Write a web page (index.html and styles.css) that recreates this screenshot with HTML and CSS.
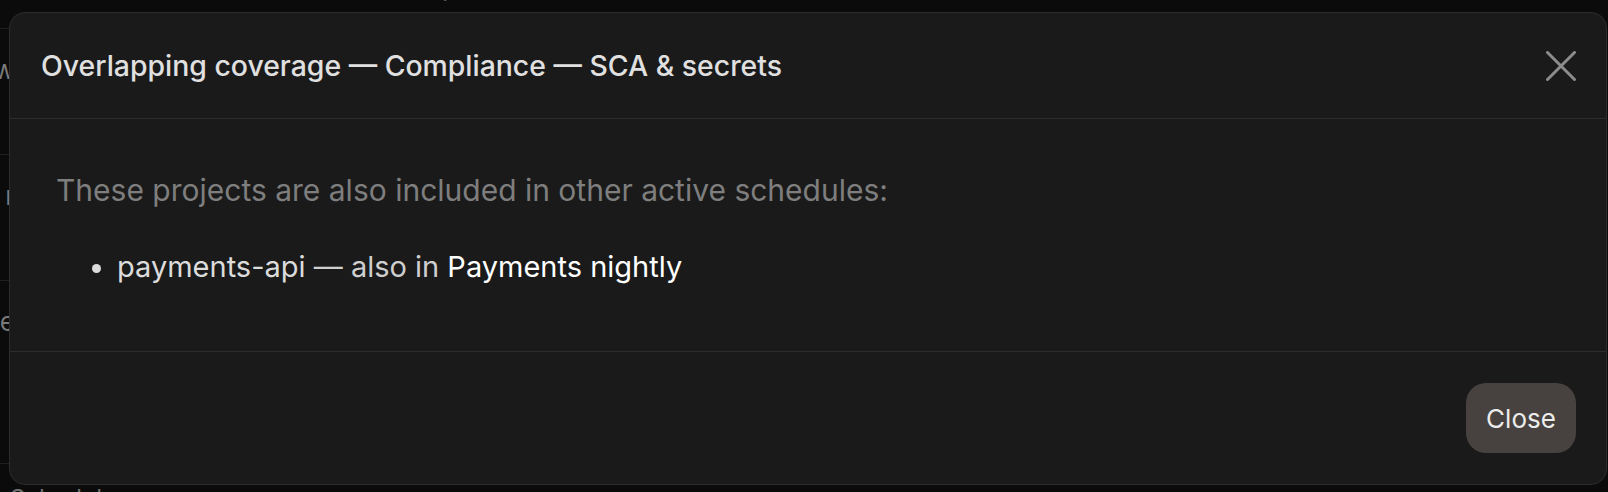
FILE: index.html
```html
<!DOCTYPE html>
<html lang="en">
<head>
<meta charset="utf-8">
<title>Overlapping coverage</title>
<link rel="stylesheet" href="styles.css">
</head>
<body>
<div class="page">
  <div class="top-text">Last run · passed</div>
  <div class="rows">
    <div class="row"><span class="cell">w</span></div>
    <div class="row"><span class="cell">r</span></div>
    <div class="row"><span class="cell">e</span></div>
  </div>
  <div class="bottom-text">Schedules</div>
</div>

<div class="overlay">
  <div class="modal" role="dialog" aria-labelledby="modal-title">
    <div class="modal-header">
      <h2 class="modal-title" id="modal-title">Overlapping coverage — Compliance — SCA &amp; secrets</h2>
      <button class="icon-btn" aria-label="Close">
        <svg width="30" height="30" viewBox="0 0 30 30" fill="none" stroke="currentColor" stroke-width="3" stroke-linecap="round">
          <path d="M1.5 1.5 L28.5 28.5 M28.5 1.5 L1.5 28.5"/>
        </svg>
      </button>
    </div>
    <div class="modal-body">
      <p class="lead">These projects are also included in other active schedules:</p>
      <ul class="overlap-list">
        <li><span class="proj">payments-api</span> <span class="also">— also in</span> <span class="sched">Payments nightly</span></li>
      </ul>
    </div>
    <div class="modal-footer">
      <button class="btn">Close</button>
    </div>
  </div>
</div>
</body>
</html>
```

FILE: styles.css
```css
* { box-sizing: border-box; }
html, body { margin: 0; padding: 0; }
body {
  background: #0b0b0b;
  font-family: Inter, "Noto Sans", sans-serif;
  width: 1608px;
  height: 492px;
  overflow: hidden;
  position: relative;
  color: #ddd;
}

.page {
  height: 492px;
  overflow: hidden;
  display: flex;
  flex-direction: column;
}
.top-text {
  font-size: 24px;
  line-height: 30px;
  color: #6f6f6f;
  margin: -27px 0 0 330px;
  height: 55px;
  flex: none;
}
.rows {
  display: flex;
  flex-direction: column;
  border-top: 1px solid #1f1f1f;
  width: 9px;
  overflow: hidden;
  flex: none;
}
.row {
  height: 126px;
  border-bottom: 1px solid #1f1f1f;
  display: flex;
  align-items: flex-start;
  justify-content: flex-end;
  padding-top: 26px;
}
.row:last-child { height: 183px; }
.cell { font-size: 26px; line-height: 30px; color: #7a7a7a; margin-right: -6px; }
.bottom-text {
  font-size: 24px;
  line-height: 30px;
  height: 30px;
  color: #6f6f6f;
  margin: 20px 0 0 10px;
  flex: none;
}

.overlay {
  position: absolute;
  inset: 0;
}
.modal {
  position: absolute;
  left: 9px;
  top: 12px;
  width: 1598px;
  height: 473px;
  background: #1a1a1a;
  border: 1px solid #2c2c2c;
  border-radius: 16px;
  display: flex;
  flex-direction: column;
}
.modal-header {
  height: 106px;
  flex: none;
  display: flex;
  align-items: center;
  justify-content: space-between;
  padding: 0 30px 0 31px;
  border-bottom: 1px solid #2c2c2c;
}
.modal-title {
  margin: 0;
  font-size: 28.4px;
  font-weight: 500;
  color: #e0e0e0;
}
.icon-btn {
  background: none;
  border: 0;
  padding: 0;
  color: #8c8c8c;
  width: 30px;
  height: 30px;
  display: flex;
}
.modal-body {
  height: 233px;
  flex: none;
  padding: 53px 46px 0 46px;
  border-bottom: 1px solid #2c2c2c;
}
.lead {
  margin: 0;
  font-size: 30px;
  color: #7e7e7e;
  line-height: 36px;
}
.overlap-list {
  margin: 41px 0 0 0;
  padding-left: 61px;
  font-size: 29px;
  line-height: 36px;
}
.overlap-list li::marker { color: #dcdcdc; }
.proj { color: #dcdcdc; }
.also { color: #cfcfcf; }
.sched { color: #ffffff; }

.modal-footer {
  flex: 1;
  display: flex;
  align-items: center;
  justify-content: flex-end;
  padding: 0 30px;
}
.btn {
  font-family: Inter, "Noto Sans", sans-serif;
  font-size: 26px;
  color: #ececec;
  background: #47423f;
  border: 0;
  border-radius: 20px;
  height: 70px;
  width: 110px;
  padding: 0;
}
```
